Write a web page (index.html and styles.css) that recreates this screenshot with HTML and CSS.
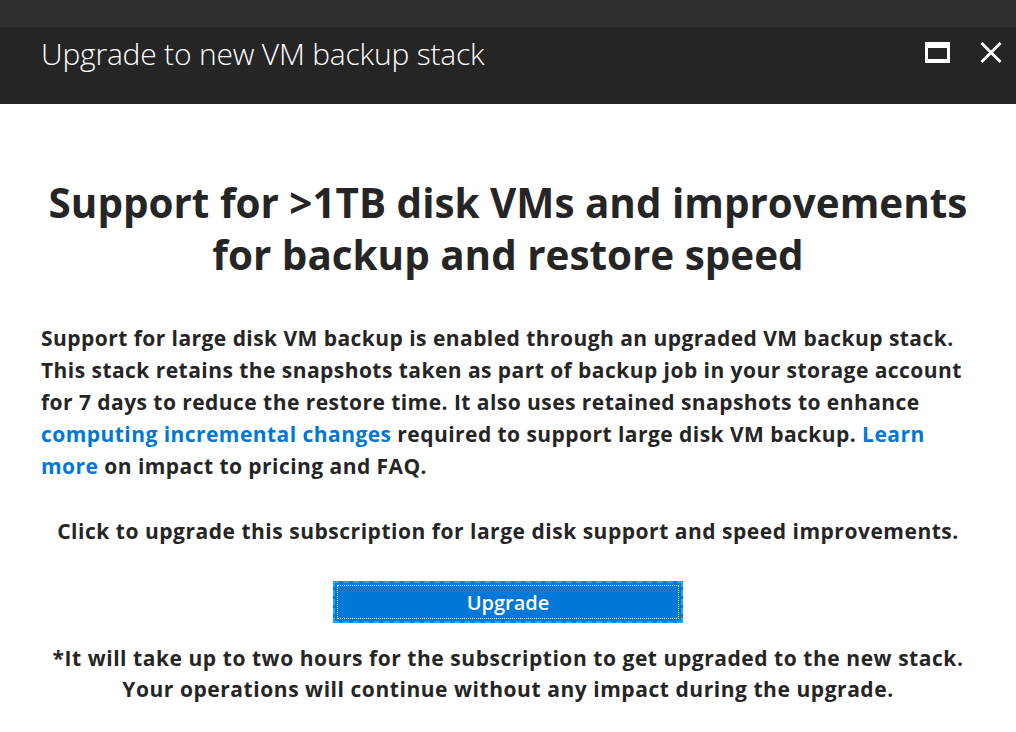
FILE: index.html
```html
<!DOCTYPE html>
<html lang="en">
<head>
<meta charset="utf-8">
<title>Upgrade to new VM backup stack</title>
<link rel="stylesheet" href="styles.css">
</head>
<body>
<div class="topbar"></div>
<header class="header">
  <h2 class="title">Upgrade to new VM backup stack</h2>
  <div class="controls">
    <button class="ctrl" aria-label="Maximize">
      <svg width="25" height="21" viewBox="0 0 25 21"><path fill="#fff" fill-rule="evenodd" d="M0 0H25V21H0Z M3 6V17H22V6Z"/></svg>
    </button>
    <button class="ctrl" aria-label="Close">
      <svg width="22" height="21" viewBox="0 0 22 21"><path d="M1.5 1L20.5 20M20.5 1L1.5 20" stroke="#fff" stroke-width="2.8" fill="none"/></svg>
    </button>
  </div>
</header>
<main class="content">
  <h1 class="headline">Support for &gt;1TB disk VMs and improvements for backup and restore speed</h1>
  <p class="desc">Support for large disk VM backup is enabled through an upgraded VM backup stack. This stack retains the snapshots taken as part of backup job in your storage account for 7 days to reduce the restore time. It also uses retained snapshots to enhance <a href="#">computing incremental changes</a> required to support large disk VM backup. <a href="#">Learn more</a> on impact to pricing and FAQ.</p>
  <p class="cta">Click to upgrade this subscription for large disk support and speed improvements.</p>
  <div class="actions"><button class="upgrade">Upgrade</button></div>
  <p class="note">*It will take up to two hours for the subscription to get upgraded to the new stack.<br>Your operations will continue without any impact during the upgrade.</p>
</main>
</body>
</html>
```

FILE: styles.css
```css
* { box-sizing: border-box; }
html, body { margin: 0; padding: 0; background: #fff; }
body {
  font-family: "Open Sans", "Noto Sans", sans-serif;
  color: #252525;
  width: 1016px;
  height: 732px;
  overflow: hidden;
}
.topbar { height: 27px; background: #2f2f2f; }
.header {
  height: 77px;
  background: #252525;
  display: flex;
  align-items: center;
  justify-content: space-between;
  padding: 0 14px 24px 41px;
}
.title {
  margin: 0;
  font-weight: 300;
  font-size: 30px;
  color: #fff;
  letter-spacing: -0.2px;
}
.controls { display: flex; align-items: center; gap: 30px; position: relative; top: -1px; }
.ctrl { background: none; border: 0; padding: 0; display: flex; cursor: pointer; }
.content { padding: 0 41px; text-align: center; }
.headline {
  margin: 73px 0 0;
  font-size: 40.4px;
  line-height: 52px;
  font-weight: 700;
  color: #252525;
}
.desc {
  margin: 41px 0 0;
  text-align: left;
  font-size: 21px;
  line-height: 32px;
  font-weight: 700;
  letter-spacing: 0.45px;
}
.desc a { color: #0078d7; text-decoration: none; }
.cta {
  margin: 33px 0 0;
  font-size: 21px;
  line-height: 32px;
  font-weight: 700;
  letter-spacing: 0.52px;
}
.actions { margin-top: 34px; display: flex; justify-content: center; }
.upgrade {
  width: 350px;
  height: 42px;
  background: #0078d7;
  color: #fff;
  font-family: inherit;
  font-size: 20px;
  font-weight: 600;
  border: 2px dashed #1ba9e8;
  outline: 1px dotted #fff;
  outline-offset: -5px;
  padding: 0;
}
.note {
  margin: 20px 0 0;
  font-size: 21px;
  line-height: 31px;
  font-weight: 700;
  letter-spacing: 0.55px;
}
```
